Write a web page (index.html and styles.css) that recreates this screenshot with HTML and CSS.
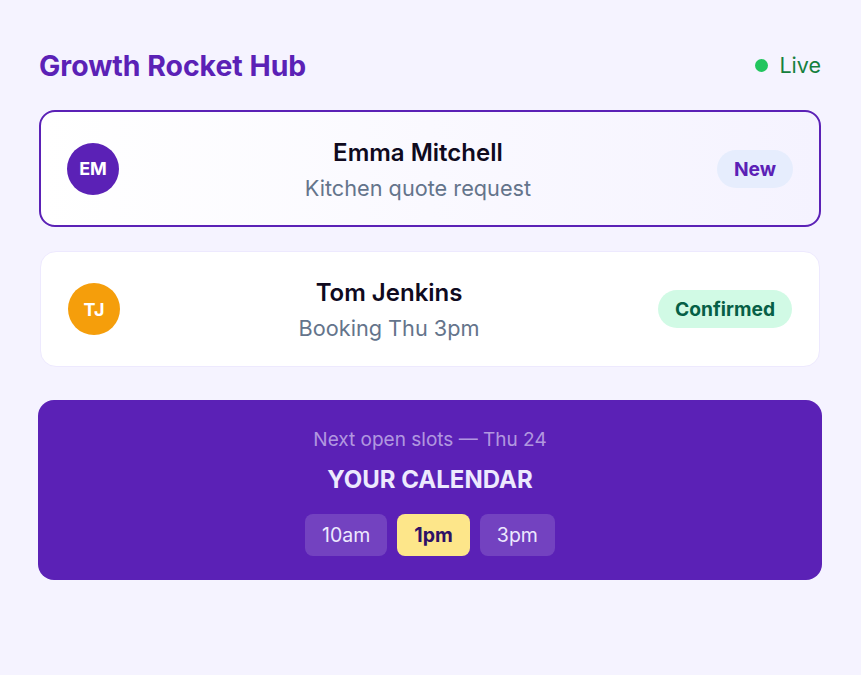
FILE: index.html
```html
<!DOCTYPE html>
<html lang="en">
<head>
<meta charset="utf-8">
<title>Growth Rocket Hub</title>
<link rel="stylesheet" href="styles.css">
</head>
<body>
<main class="hub">
  <header class="hub-header">
    <h1 class="brand">Growth Rocket Hub</h1>
    <div class="status"><span class="status-dot"></span>Live</div>
  </header>

  <section class="lead lead-active">
    <div class="avatar avatar-purple">EM</div>
    <div class="lead-info">
      <div class="lead-name">Emma Mitchell</div>
      <div class="lead-desc">Kitchen quote request</div>
    </div>
    <span class="badge badge-new">New</span>
  </section>

  <section class="lead">
    <div class="avatar avatar-amber">TJ</div>
    <div class="lead-info">
      <div class="lead-name">Tom Jenkins</div>
      <div class="lead-desc">Booking Thu 3pm</div>
    </div>
    <span class="badge badge-confirmed">Confirmed</span>
  </section>

  <section class="calendar">
    <div class="cal-sub">Next open slots — Thu 24</div>
    <div class="cal-title">YOUR CALENDAR</div>
    <div class="slots">
      <span class="slot">10am</span>
      <span class="slot slot-picked">1pm</span>
      <span class="slot">3pm</span>
    </div>
  </section>
</main>
</body>
</html>
```
FILE: styles.css
```css
* { box-sizing: border-box; }
html, body { margin: 0; padding: 0; }
body {
  background: #f5f3ff;
  font-family: Inter, "Noto Sans", sans-serif;
  width: 861px;
  height: 675px;
  overflow: hidden;
}
.hub {
  padding: 46px 40px 0 39px;
  display: flex;
  flex-direction: column;
}
.hub-header {
  display: flex;
  align-items: center;
  justify-content: space-between;
  height: 38px;
  margin-bottom: 26px;
}
.brand {
  margin: 0;
  font-size: 28.4px;
  font-weight: 700;
  color: #5b21b6;
  letter-spacing: 0;
}
.status {
  display: flex;
  align-items: center;
  gap: 11px;
  font-size: 21.5px;
  color: #15803d;
}
.status-dot {
  width: 13px;
  height: 13px;
  border-radius: 50%;
  background: #22c55e;
}
.lead {
  display: flex;
  align-items: center;
  gap: 20px;
  background: #ffffff;
  border: 1px solid #ede9fe;
  border-radius: 16px;
  padding: 25px 27px 23px;
  height: 116px;
  margin: 0 1px 24px;
}
.lead-active {
  border: 2px solid #5b21b6;
  background: linear-gradient(90deg, #ffffff 0%, #f5f3ff 100%);
  margin: 0 0 24px;
  padding: 25px 26px 23px;
  height: 117px;
}
.avatar {
  width: 52px;
  height: 52px;
  border-radius: 50%;
  flex: none;
  display: flex;
  align-items: center;
  justify-content: center;
  color: #ffffff;
  font-weight: 700;
  font-size: 18px;
  margin-top: -2px;
}
.avatar-purple { background: #5b21b6; }
.avatar-amber { background: #f59e0b; }
.lead-info {
  flex: 1;
  text-align: center;
  display: flex;
  flex-direction: column;
  gap: 8px;
}
.lead-name {
  font-size: 24px;
  font-weight: 600;
  color: #0f0a1e;
  line-height: 29px;
}
.lead-desc {
  font-size: 21.7px;
  color: #64748b;
  line-height: 27px;
}
.badge {
  flex: none;
  height: 38px;
  padding: 0 17px;
  border-radius: 19px;
  display: flex;
  align-items: center;
  font-size: 19.2px;
  font-weight: 700;
  margin-top: -2px;
}
.badge-new { background: #e6edfd; color: #5b21b6; }
.badge-confirmed { background: #d1fae5; color: #065f46; }
.calendar {
  margin-top: 9px;
  height: 180px;
  background: #5b21b6;
  border-radius: 16px;
  display: flex;
  flex-direction: column;
  align-items: center;
  padding-top: 27px;
  margin-left: -1px;
  margin-right: -1px;
}
.cal-sub {
  font-size: 19px;
  color: rgba(237, 233, 254, 0.6);
  line-height: 25px;
}
.cal-title {
  margin-top: 13px;
  font-size: 24px;
  font-weight: 700;
  color: #ede9fe;
  line-height: 30px;
}
.slots {
  margin-top: 19px;
  display: flex;
  gap: 10px;
}
.slot {
  height: 42px;
  padding: 0 17px;
  border-radius: 8px;
  background: rgba(255, 255, 255, 0.15);
  color: #ede9fe;
  font-size: 19.5px;
  display: flex;
  align-items: center;
}
.slot-picked {
  background: #fde68a;
  color: #2e1065;
  font-weight: 700;
}
```
